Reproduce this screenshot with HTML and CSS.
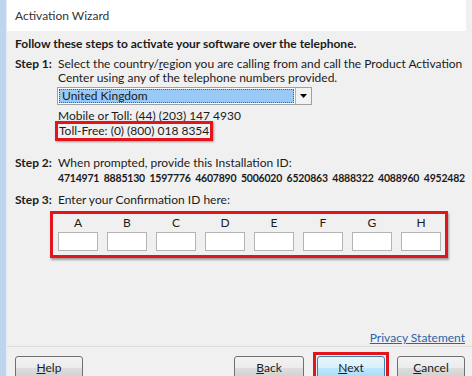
FILE: index.html
```html
<!DOCTYPE html>
<html lang="en">
<head>
    <meta charset="UTF-8">
    <meta name="viewport" content="width=device-width, initial-scale=1.0">
    <title>Activation Wizard</title>
    <link rel="stylesheet" href="styles.css">
</head>
<body>

<div class="frame">
    <!-- window border on the left -->
    <div class="edge"></div>

    <div class="window">
        <div class="title">Activation Wizard</div>

        <div class="content">
            <p class="lead">Follow these steps to activate your software over the telephone.</p>

            <!-- Step 1 -->
            <div class="step">
                <div class="label">Step 1:</div>
                <div class="body">
                    <p>Select the country/<u>r</u>egion you are calling from and call the Product Activation<br>Center using any of the telephone numbers provided.</p>
                    <div class="select">
                        <span class="value">United Kingdom</span>
                        <span class="arrow"><svg width="7" height="4" viewBox="0 0 7 4"><path d="M0 0h7L3.5 4z" fill="#000"/></svg></span>
                    </div>
                    <p class="phone">Mobile or Toll: (44) (203) 147 4930</p>
                    <p class="phone tollfree">Toll-Free: (0) (800) 018 8354</p>
                </div>
            </div>

            <!-- Step 2 -->
            <div class="step step2">
                <div class="label">Step 2:</div>
                <div class="body">
                    <p>When prompted, provide this Installation ID:</p>
                    <p class="install-id">
                        <span>4714971</span><span>8885130</span><span>1597776</span>
                        <span>4607890</span><span>5006020</span><span>6520863</span>
                        <span>4888322</span><span>4088960</span><span>4952482</span>
                    </p>
                </div>
            </div>

            <!-- Step 3 -->
            <div class="step step3">
                <div class="label">Step 3:</div>
                <div class="body">
                    <p>Enter your Confirmation ID here:</p>
                </div>
            </div>

            <div class="confirm">
                <div class="group"><span>A</span><div class="box"></div></div>
                <div class="group"><span>B</span><div class="box"></div></div>
                <div class="group"><span>C</span><div class="box"></div></div>
                <div class="group"><span>D</span><div class="box"></div></div>
                <div class="group"><span>E</span><div class="box"></div></div>
                <div class="group"><span>F</span><div class="box"></div></div>
                <div class="group"><span>G</span><div class="box"></div></div>
                <div class="group"><span>H</span><div class="box"></div></div>
            </div>

            <div class="privacy"><a href="#">Privacy Statement</a></div>
        </div>

        <!-- Buttons -->
        <div class="footer">
            <div class="btn help"><u>H</u>elp</div>
            <div class="spacer"></div>
            <div class="btn"><u>B</u>ack</div>
            <div class="next-wrap"><div class="btn next"><u>N</u>ext</div></div>
            <div class="btn cancel"><u>C</u>ancel</div>
        </div>
    </div>
</div>

</body>
</html>
```

FILE: styles.css
```css
body {
    margin: 0;
    font-family: Lato, "Noto Sans", sans-serif;
    font-size: 12px;
    color: #1b1b1b;
    background: #f0f0f0;
    overflow: hidden;
}
p {
    margin: 0;
    line-height: 14px;
}
.frame {
    display: flex;
    height: 376px;
}
.edge {
    width: 6px;
    flex-shrink: 0;
    background: #bed5ee;
    border-right: 1px solid #e2ecf7;
}
.window {
    flex: 1;
    min-width: 0;
    display: flex;
    flex-direction: column;
}
.title {
    flex-shrink: 0;
    height: 31px;
    line-height: 31px;
    padding-left: 8px;
    background: #ffffff;
    color: #333;
    margin-right: 6px;
}
.content {
    flex-shrink: 0;
    padding: 6px 0 0 8px;
    height: 309px;
    border-bottom: 1px solid #dcdcdc;
    position: relative;
}
.lead {
    font-weight: bold;
    margin-bottom: 6px;
}
.step {
    display: flex;
}
.label {
    width: 43px;
    flex-shrink: 0;
    font-weight: bold;
    line-height: 14px;
}
.body {
    min-width: 0;
}
.select {
    display: flex;
    width: 253px;
    height: 16px;
    margin: 2px 0 4px -1px;
    border: 1px solid #a0a0a0;
    background: #fff;
}
.value {
    flex: 1;
    margin: 1px;
    padding-left: 3px;
    line-height: 14px;
    background: #99c9f7;
    outline: 1px dotted #3a5f8a;
    outline-offset: -1px;
}
.arrow {
    width: 15px;
    display: flex;
    align-items: center;
    justify-content: center;
    border-left: 1px solid #b0b0b0;
    background: #f2f2f2;
}
.tollfree {
    display: inline-block;
    margin: -2px 0 0 -3px;
    padding: 0 1px;
    border: 3px solid #e0161c;
    box-shadow: 1px 1px 2px rgba(0, 0, 0, 0.35);
}
.step2 {
    margin-top: 15px;
}
.install-id {
    display: flex;
    justify-content: space-between;
    width: 407px;
    margin-top: 1px;
    font-size: 10.5px;
    font-weight: bold;
    letter-spacing: -0.2px;
}
.step3 {
    margin-top: 8px;
}
.confirm {
    display: flex;
    gap: 9px;
    width: fit-content;
    margin: 4px 0 0 35px;
    padding: 2px 4px 4px 5px;
    border: 3px solid #e0161c;
    box-shadow: 1px 2px 2px rgba(0, 0, 0, 0.35);
}
.group {
    display: flex;
    flex-direction: column;
    align-items: center;
}
.group span {
    line-height: 14px;
    margin-bottom: 2px;
}
.box {
    width: 38px;
    height: 17px;
    background: #fff;
    border: 1px solid #b4b4b4;
}
.privacy {
    position: absolute;
    right: 7px;
    bottom: 1px;
}
.privacy a {
    color: #2b62a8;
}
.footer {
    display: flex;
    align-items: flex-start;
    padding: 9px 0 0 8px;
}
.spacer {
    flex: 1;
}
.btn {
    width: 70px;
    height: 24px;
    line-height: 22px;
    text-align: center;
    box-sizing: border-box;
    border: 1px solid #707070;
    border-radius: 3px;
    background: linear-gradient(#f3f3f3, #ebebeb 50%, #dddddd 51%, #cfcfcf);
    flex-shrink: 0;
}
.help {
    width: 68px;
}
.next-wrap {
    margin: -4px 8px 0 9px;
    padding: 1px;
    border: 3px solid #e0161c;
}
.next {
    width: 68px;
    border-color: #3c7fb1;
    background: linear-gradient(#eaf6fd, #d9f0fc 50%, #bee6fd 51%, #a7d9f5);
}
.cancel {
    width: 68px;
    margin-right: 7px;
}
```
